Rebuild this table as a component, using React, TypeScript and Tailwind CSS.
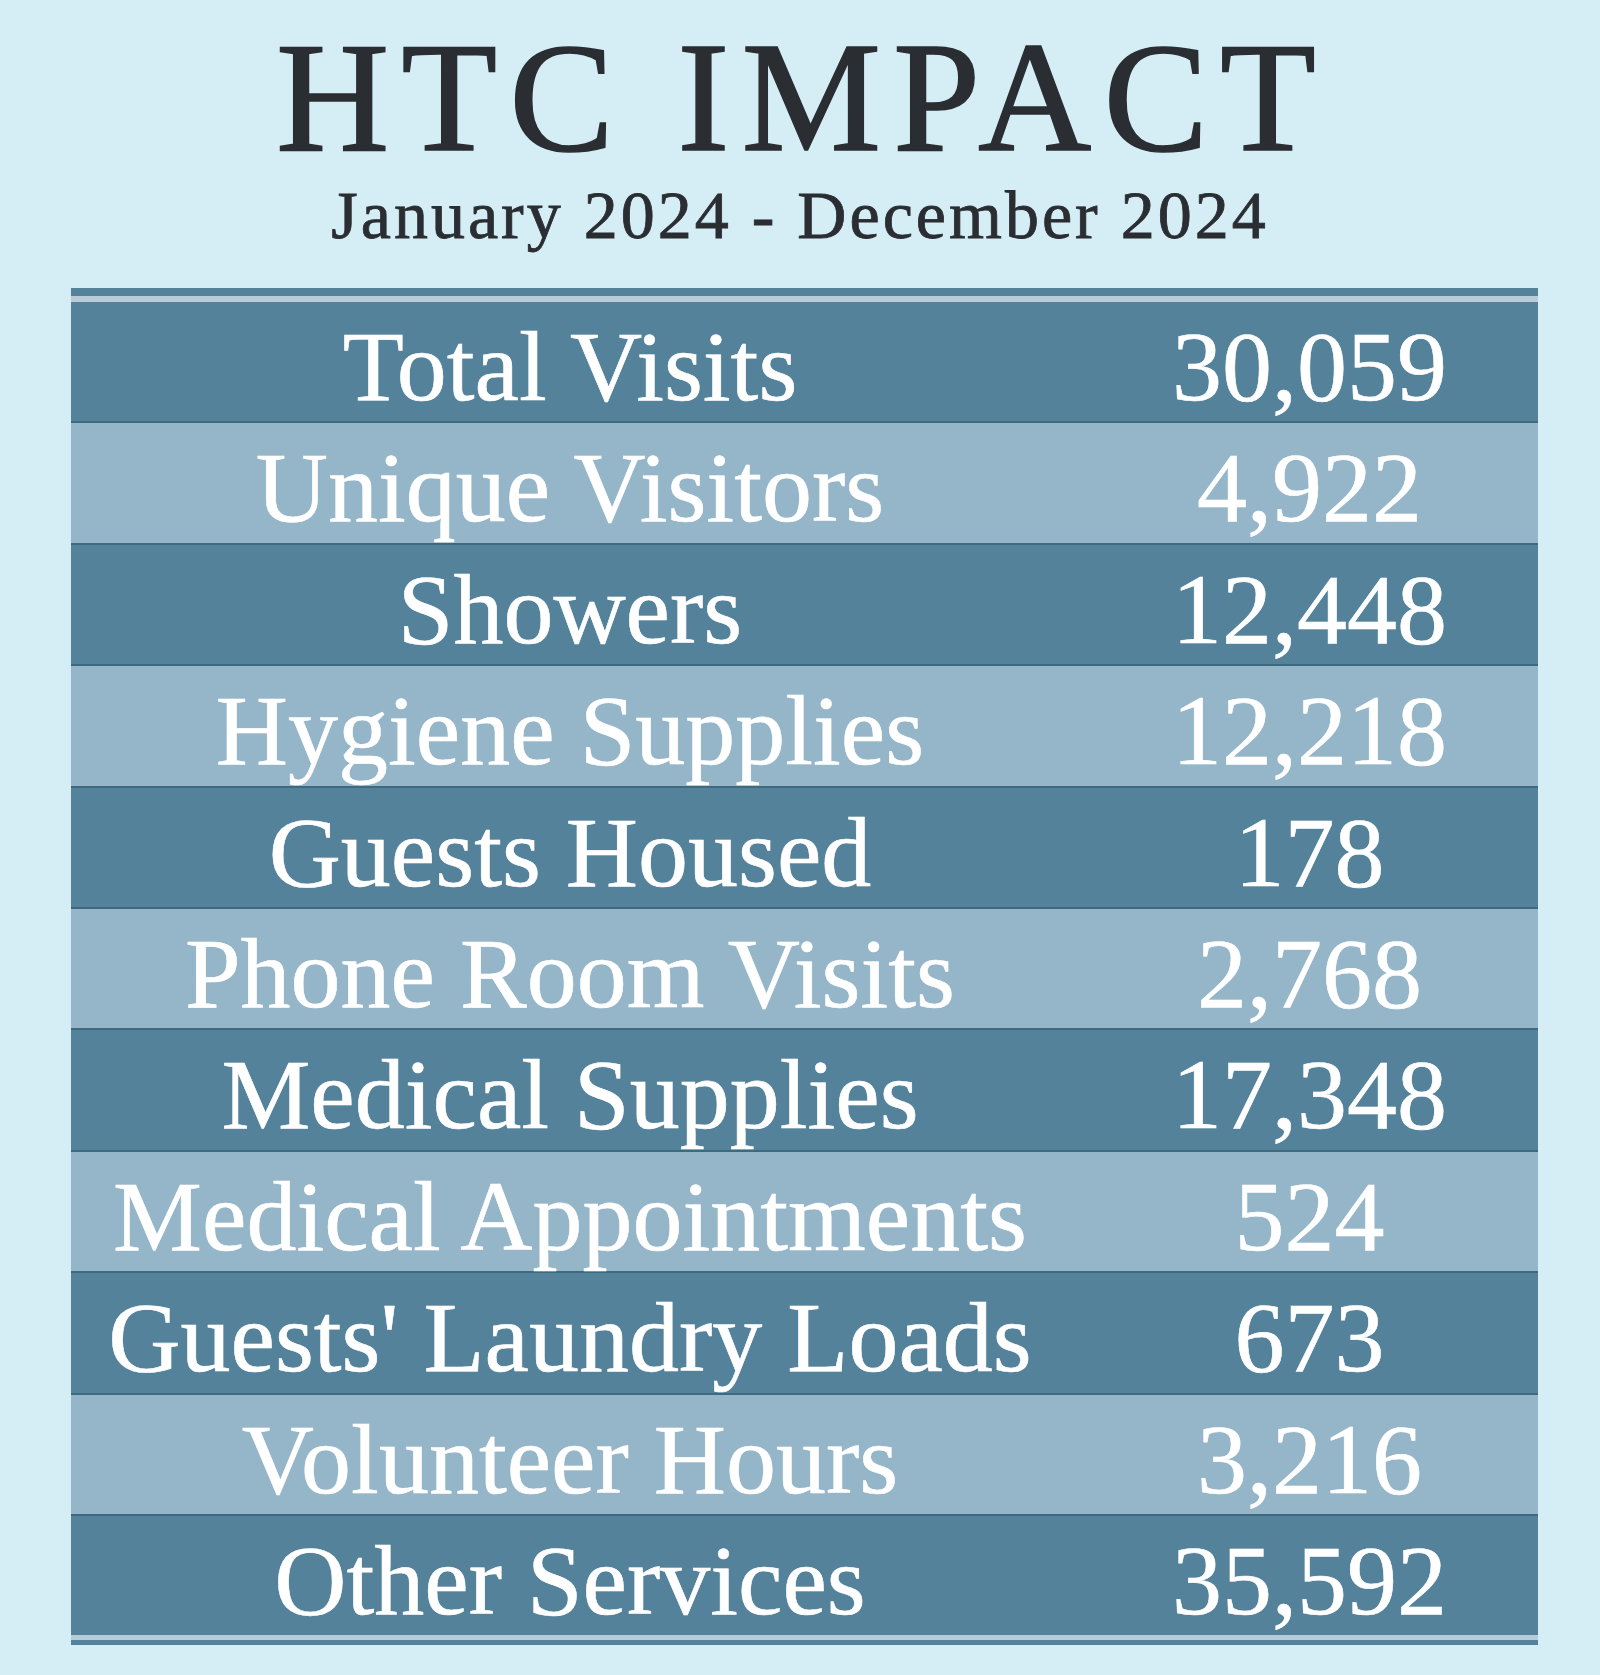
import React from "react";

const rows: [string, string][] = [
  ["Total Visits", "30,059"],
  ["Unique Visitors", "4,922"],
  ["Showers", "12,448"],
  ["Hygiene Supplies", "12,218"],
  ["Guests Housed", "178"],
  ["Phone Room Visits", "2,768"],
  ["Medical Supplies", "17,348"],
  ["Medical Appointments", "524"],
  ["Guests' Laundry Loads", "673"],
  ["Volunteer Hours", "3,216"],
  ["Other Services", "35,592"],
];

export default function App() {
  return (
    <div
      className="w-[1600px] h-[1675px] bg-[#d5edf5] overflow-hidden"
      style={{ fontFamily: '"Liberation Serif", "Times New Roman", serif' }}
    >
      <div className="pt-[19px] text-center text-[#2a2e33]">
        <div className="text-[157px] leading-[157px] tracking-[12px] pl-[4px] [-webkit-text-stroke:1.5px_#2a2e33]">HTC IMPACT</div>
        <div className="mt-[5px] text-[68px] leading-[68px] tracking-[3px] [-webkit-text-stroke:0.8px_#2a2e33]">January 2024 - December 2024</div>
      </div>
      <div className="ml-[71px] mt-[39px] w-[1467px]">
        <div className="h-[8px] bg-[#53829a]" />
        <div className="h-[6px] bg-[#b7cbd8]" />
        {rows.map(([label, value], i) => (
          <div
            key={label}
            className={
              "flex h-[119.4px] text-white text-[100px] leading-[100px] [-webkit-text-stroke:0.6px_#ffffff] " +
              (i % 2 === 0 ? "bg-[#53829a]" : "bg-[#95b5c8]") +
              (i > 0 ? " border-t-2 border-[#3e6a80] box-content" : "")
            }
          >
            <div className="w-[998px] text-center pt-[15px] whitespace-nowrap">{label}</div>
            <div className="flex-1 text-center pt-[15px] pl-[12px] whitespace-nowrap">{value}</div>
          </div>
        ))}
        <div className="h-[5px] bg-[#b7cbd8]" />
        <div className="h-[5px] bg-[#53829a]" />
      </div>
    </div>
  );
}
